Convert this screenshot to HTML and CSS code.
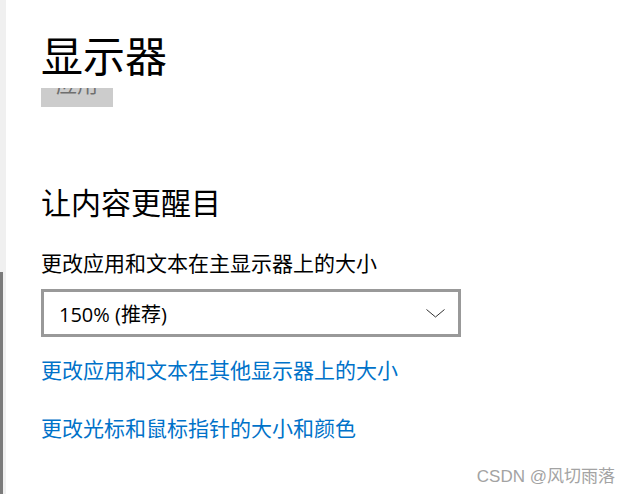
FILE: index.html
```html
<!DOCTYPE html>
<html lang="zh-CN">
<head>
    <meta charset="UTF-8">
    <meta name="viewport" content="width=device-width, initial-scale=1.0">
    <title>显示器</title>
    <link rel="stylesheet" href="styles.css">
</head>
<body>
    <div class="page">
        <!-- left edge with scroll thumb -->
        <div class="side-strip">
            <div class="thumb"></div>
        </div>

        <!-- Main Content -->
        <div class="content">
            <h1 class="page-title">显示器</h1>
            <div class="apply-clip">
                <span class="apply-text">应用</span>
            </div>

            <h2 class="section-title">让内容更醒目</h2>
            <p class="field-label">更改应用和文本在主显示器上的大小</p>
            <div class="select-box">
                <span class="select-value">150% (推荐)</span>
                <svg class="chevron" width="19" height="9" viewBox="0 0 19 9">
                    <path d="M0.5 0.5 L9.5 8 L18.5 0.5" fill="none" stroke="#333" stroke-width="1"/>
                </svg>
            </div>

            <a href="#" class="link first-link">更改应用和文本在其他显示器上的大小</a>
            <a href="#" class="link">更改光标和鼠标指针的大小和颜色</a>
        </div>
    </div>

    <div class="watermark">CSDN @风切雨落</div>
</body>
</html>
```

FILE: styles.css
```css
html, body {
    height: 100%;
}
body {
    margin: 0;
    overflow: hidden;
    background-color: #ffffff;
    font-family: "Noto Sans CJK SC", "Noto Sans", sans-serif;
    color: #000000;
    position: relative;
}
.page {
    display: flex;
    height: 100%;
}
.side-strip {
    width: 6px;
    background-color: #f0f0f0;
    display: flex;
    flex-direction: column;
}
.thumb {
    margin-top: 272px;
    flex: 1;
    width: 3px;
    background-color: #7b7b7b;
}
.content {
    flex: 1;
    padding-left: 35px;
    display: flex;
    flex-direction: column;
    align-items: flex-start;
}
.page-title {
    margin: 33px 0 0 0;
    font-size: 42px;
    line-height: 42px;
    font-weight: normal;
}
.apply-clip {
    margin-top: 13px;
    width: 72px;
    height: 19px;
    overflow: hidden;
    background-color: #cccccc;
}
.apply-text {
    display: block;
    margin-top: -15px;
    font-size: 21px;
    line-height: 21px;
    text-align: center;
    color: #6e6e6e;
}
.section-title {
    margin: 79px 0 0 0;
    font-size: 30px;
    line-height: 30px;
    font-weight: normal;
}
.field-label {
    margin: 36px 0 0 0;
    font-size: 21px;
    line-height: 21px;
}
.select-box {
    margin-top: 16px;
    box-sizing: border-box;
    width: 420px;
    height: 48px;
    border: 3px solid #999999;
    display: flex;
    align-items: center;
    justify-content: space-between;
    padding: 0 13px 0 15px;
}
.select-value {
    font-family: "Open Sans", "Noto Sans CJK SC", sans-serif;
    font-size: 20px;
}
.chevron {
    display: block;
}
.link {
    margin-top: 37px;
    font-size: 21px;
    line-height: 21px;
    color: #0072c9;
    text-decoration: none;
}
.first-link {
    margin-top: 22px;
}
.watermark {
    position: absolute;
    right: 16px;
    bottom: 9px;
    font-family: "Liberation Sans", "Noto Sans CJK SC", sans-serif;
    font-size: 17px;
    line-height: 17px;
    color: #a3a3a3;
}
```
